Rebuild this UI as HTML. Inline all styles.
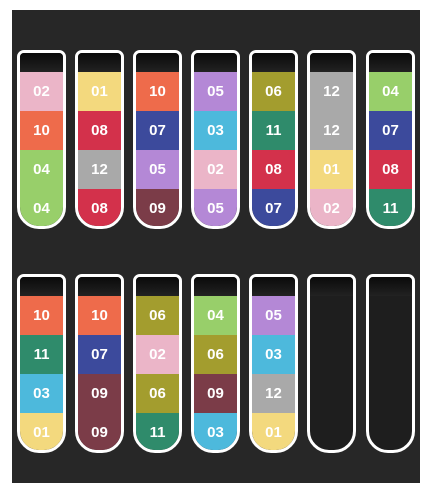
<!DOCTYPE html><html><head><style>
body{margin:0;width:427px;height:487px;background:#fff;position:relative;overflow:hidden;font-family:"Liberation Sans",sans-serif}
.bg{position:absolute;left:12px;top:10px;width:408px;height:473px;background:#272727}
.t{position:absolute;width:43px;height:173px;border:3px solid #fff;border-radius:7px 7px 22px 22px;overflow:hidden;background:#1e1e1e}
.cap{height:19px;background:linear-gradient(#0a0a0a,#222)}
.s{height:39px;color:#fff;font-weight:bold;font-size:15px;text-align:center;line-height:39px}
.c01{background:#f3d97e}.c02{background:#ebb5c8}.c03{background:#4db9dc}.c04{background:#98cf6a}.c05{background:#b488d6}.c06{background:#a39d2e}.c07{background:#3c4a9c}.c08{background:#d3314b}.c09{background:#7b3c48}.c10{background:#ee6b4b}.c11{background:#2f8b6b}.c12{background:#a9a9a9}
</style></head><body><div class="bg"></div>
<div id="w"></div>
<script>
var rows=[[["02","10","04","04"],["01","08","12","08"],["10","07","05","09"],["05","03","02","05"],["06","11","08","07"],["12","12","01","02"],["04","07","08","11"]],
[["10","11","03","01"],["10","07","09","09"],["06","02","06","11"],["04","06","09","03"],["05","03","12","01"],[],[]]];
var xs=[17,75,133,191,249,307,366],ys=[50,274],h="";
rows.forEach(function(r,ri){r.forEach(function(t,i){h+='<div class="t" style="left:'+xs[i]+'px;top:'+ys[ri]+'px"><div class="cap"></div>';t.forEach(function(c){h+='<div class="s c'+c+'">'+c+'</div>'});h+='</div>'})});
document.getElementById("w").innerHTML=h;
</script></body></html>
